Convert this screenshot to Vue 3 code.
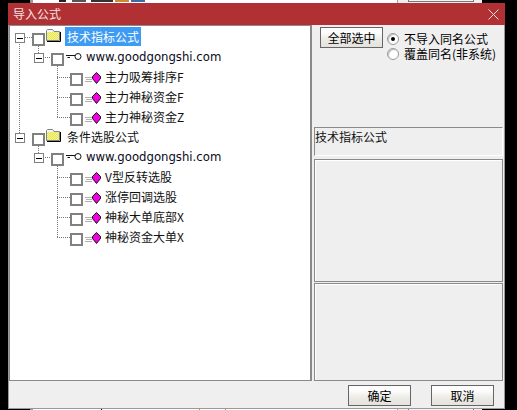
<script setup>
const rows = [
  { level: 0, type: 'folder', label: '技术指标公式', selected: true },
  { level: 1, type: 'key', label: 'www.goodgongshi.com' },
  { level: 2, type: 'item', label: '主力吸筹排序F' },
  { level: 2, type: 'item', label: '主力神秘资金F' },
  { level: 2, type: 'item', label: '主力神秘资金Z' },
  { level: 0, type: 'folder', label: '条件选股公式' },
  { level: 1, type: 'key', label: 'www.goodgongshi.com' },
  { level: 2, type: 'item', label: 'V型反转选股' },
  { level: 2, type: 'item', label: '涨停回调选股' },
  { level: 2, type: 'item', label: '神秘大单底部X' },
  { level: 2, type: 'item', label: '神秘资金大单X' }
]
const dotted = [
  'M19.5 42V133', 'M25 37.5H32',
  'M38.5 46V53', 'M45 57.5H51',
  'M57.5 66V117.5', 'M57 77.5H70', 'M57 97.5H70', 'M57 117.5H70',
  'M38.5 146V153', 'M45 157.5H51',
  'M57.5 166V237.5', 'M57 177.5H70', 'M57 197.5H70', 'M57 217.5H70', 'M57 237.5H70'
]
</script>

<template>
  <div class="screen">
    <div class="strip strip-top">
      <div class="strip-white">
        <i class="tick t1"></i><i class="tick t2"></i><i class="tick t3"></i><i class="tick t4"></i><i class="tick t5"></i>
      </div>
      <div class="strip-grey"><div class="strip-box"></div></div>
    </div>

    <div class="dialog">
      <header class="titlebar">
        <span class="title">导入公式</span>
        <svg class="close" width="11" height="11" viewBox="0 0 11 11">
          <path d="M.5 .5L10.5 10.5M10.5 .5L.5 10.5" stroke="#f3dcdc" stroke-width="1" fill="none" />
        </svg>
      </header>

      <div class="body">
        <div class="main">
          <div class="tree">
            <svg class="lines" width="301" height="352" viewBox="10 26 301 352">
              <path v-for="d in dotted" :key="d" :d="d" stroke="#777" stroke-width="1" stroke-dasharray="1 1" fill="none" shape-rendering="crispEdges" />
            </svg>
            <div v-for="(row, i) in rows" :key="i" class="row" :class="'level' + row.level">
              <span v-if="row.level < 2" class="expander"><i></i></span>
              <span class="check"></span>

              <svg v-if="row.type === 'folder'" class="ic-folder" width="16" height="13" viewBox="0 0 16 13">
                <defs>
                  <pattern :id="'dither' + i" width="2" height="2" patternUnits="userSpaceOnUse">
                    <rect width="2" height="2" fill="#fbfb50" />
                    <rect width="1" height="1" fill="#dede9a" />
                    <rect x="1" y="1" width="1" height="1" fill="#dede9a" />
                  </pattern>
                </defs>
                <path d="M1.5 11.5V1.5L2.5 .5H7.5L9 2.5H14.5V11.5Z" fill="#f4f4f4" stroke="#808080" />
                <rect x="2" y="3" width="12" height="8" :fill="'url(#dither' + i + ')'" />
                <path d="M15.5 3V12.5H2" stroke="#000" fill="none" />
              </svg>

              <svg v-else-if="row.type === 'key'" class="ic-key" width="16" height="9" viewBox="0 0 16 9">
                <path d="M0 3.5H9M1.5 5.5H4" stroke="#111" fill="none" />
                <circle cx="12" cy="4.5" r="3" fill="#fff" stroke="#111" />
              </svg>

              <svg v-else class="ic-item" width="17" height="12" viewBox="0 0 17 12">
                <path d="M0 5.5H7M1 7.5H7M0 9.5H7" stroke="#b0b0b0" fill="none" shape-rendering="crispEdges" />
                <path d="M11.5 .5L15.5 4.5V6.5L11.5 11.5L7.5 6.5V4.5Z" fill="#f000e0" stroke="#111" />
              </svg>

              <span class="label" :class="{ selected: row.selected, url: row.type === 'key' }">{{ row.label }}</span>
            </div>
          </div>

          <aside class="side">
            <div class="controls">
              <button class="btn btn-all">全部选中</button>
              <div class="radios">
                <label class="radio"><span class="dot on"></span>不导入同名公式</label>
                <label class="radio"><span class="dot"></span>覆盖同名(非系统)</label>
              </div>
            </div>
            <div class="info">技术指标公式</div>
            <div class="panel panel-a"></div>
            <div class="panel panel-b"></div>
          </aside>
        </div>

        <footer class="footer">
          <button class="btn btn-foot">确定</button>
          <button class="btn btn-foot">取消</button>
        </footer>
      </div>
    </div>

    <div class="strip strip-bottom">
      <div class="strip-white">
        <i class="tick b1"></i><i class="tick b2"></i><i class="tick b3"></i>
      </div>
      <div class="strip-grey"><div class="strip-box"></div></div>
    </div>
  </div>
</template>

<style>
html, body { margin: 0; background: #000; }
</style>

<style scoped>
.screen {
  width: 517px;
  height: 410px;
  background: #000;
  overflow: hidden;
  font-family: "Noto Sans CJK SC", "Liberation Sans", sans-serif;
  font-size: 12px;
  color: #000;
  display: flex;
  flex-direction: column;
}

/* background window peeking above and below the dialog */
.strip { display: flex; padding-left: 30px; flex: none; }
.strip-top { height: 3px; }
.strip-bottom { height: 1px; }
.strip-white {
  width: 364px;
  background: #fff;
  border-left: 3px solid #9a9a9a;
  display: flex;
  align-items: flex-start;
}
.strip-grey {
  width: 85px;
  background: #efefef;
  border-left: 1px solid #a0a0a0;
  box-sizing: border-box;
  padding-left: 10px;
}
.strip-box {
  width: 66px;
  height: 2px;
  box-sizing: border-box;
  border: 1px solid #777;
  border-top: 0;
  background: #f4f4f4;
}
.tick { display: block; height: 2px; background: #222; flex: none; }
.t1 { width: 7px; margin-left: 26px; }
.t2 { width: 14px; margin-left: 6px; background: #555; }
.t3 { width: 22px; margin-left: 5px; background: #333; }
.t4 { width: 14px; margin-left: 2px; background: #c98a3a; }
.t5 { width: 14px; margin-left: 2px; background: #3a6ea5; }
.b1, .b2, .b3 { width: 1px; height: 1px; }
.b1 { margin-left: 68px; background: #000; }
.b2 { margin-left: 97px; background: #c98a3a; }
.b3 { margin-left: 25px; background: #c98a3a; }

/* dialog */
.dialog {
  width: 497px;
  height: 406px;
  margin-left: 8px;
  flex: none;
  display: flex;
  flex-direction: column;
}
.titlebar {
  height: 22px;
  flex: none;
  background: #b03034;
  display: flex;
  align-items: center;
  justify-content: space-between;
  padding: 0 6px 0 5px;
  color: #f2e4e4;
}
.title { font-size: 12px; line-height: 22px; }
.body {
  flex: 1;
  min-height: 0;
  background: #efefef;
  border: 1px solid #9a9a9a;
  border-top: 0;
  display: flex;
  flex-direction: column;
}
.main { height: 356px; display: flex; flex: none; }

/* tree */
.tree {
  position: relative;
  width: 303px;
  height: 356px;
  box-sizing: border-box;
  background: #fff;
  border: 1px solid #8a8a8a;
  border-right-width: 2px;
  padding-top: 1px;
  flex: none;
  overflow: hidden;
}
.lines { position: absolute; left: 0; top: 0; }
.row {
  position: relative;
  height: 20px;
  display: flex;
  align-items: flex-start;
}
.level0 { padding-left: 5px; }
.level1 { padding-left: 24px; }
.level2 { padding-left: 60px; }
.expander {
  width: 10px;
  height: 10px;
  box-sizing: border-box;
  border: 1px solid #808080;
  background: #fff;
  margin: 6px 7px 0 0;
  display: flex;
  align-items: center;
  justify-content: center;
  flex: none;
}
.expander i { display: block; width: 6px; height: 1px; background: #000; }
.check {
  width: 13px;
  height: 13px;
  box-sizing: border-box;
  border: 2px solid #808080;
  background: #fff;
  margin-top: 6px;
  flex: none;
}
.ic-folder { margin: 2px 0 0 0; flex: none; }
.ic-key { margin: 5px 0 0 2px; flex: none; }
.ic-item { margin: 5px 0 0 2px; flex: none; }
.label {
  height: 19px;
  line-height: 19px;
  padding: 0 2px;
  white-space: nowrap;
  color: #111;
}
.level0 .label { margin-left: 4px; }
.level1 .label { margin-left: 2px; }
.level2 .label { margin-left: 1px; padding-left: 2px; }
.label.selected { background: #3d9bf3; color: #fff; }
.label.url {
  font-family: "DejaVu Sans", sans-serif;
  font-size: 11.7px;
  line-height: 21px;
  color: #0a0a20;
}

/* right side */
.side {
  flex: 1;
  min-width: 0;
  padding-left: 2px;
  display: flex;
  flex-direction: column;
}
.controls {
  height: 102px;
  flex: none;
  display: flex;
  align-items: flex-start;
  padding: 2px 0 0 6px;
  box-sizing: border-box;
}
.btn {
  font: inherit;
  color: #000;
  padding: 0;
  border: 1px solid #666;
  border-radius: 0;
  background: linear-gradient(#fdfdfd 0, #fdfdfd 25%, #ecebe6 60%, #e4e2dc 100%);
  line-height: 18px;
  box-sizing: border-box;
  flex: none;
}
.btn-all { width: 63px; height: 21px; margin-right: 4px; }
.radios { display: flex; flex-direction: column; padding-top: 4px; }
.radio { display: flex; align-items: center; height: 15px; line-height: 15px; white-space: nowrap; }
.dot {
  width: 12px;
  height: 12px;
  box-sizing: border-box;
  border-radius: 50%;
  border: 1px solid #9a9a9a;
  background: #fff;
  box-shadow: inset 1px 1px 1px #bbb;
  margin-right: 5px;
  display: flex;
  align-items: center;
  justify-content: center;
  flex: none;
}
.dot.on::after {
  content: "";
  width: 4px;
  height: 4px;
  border-radius: 50%;
  background: #000;
}
.info {
  width: 189px;
  height: 29px;
  box-sizing: border-box;
  border: 1px solid #fff;
  border-top-color: #8a8a8a;
  border-left-color: #8a8a8a;
  line-height: 17px;
  color: #111;
  margin-bottom: 3px;
  flex: none;
}
.panel {
  width: 189px;
  box-sizing: border-box;
  border: 1px solid #8a8a8a;
  box-shadow: inset 1px 1px 0 #fff;
  flex: none;
}
.panel-a { height: 123px; margin-bottom: 1px; }
.panel-b { height: 98px; }

.footer {
  flex: 1;
  display: flex;
  align-items: flex-start;
  padding: 4px 0 0 339px;
  gap: 20px;
}
.btn-foot { width: 63px; height: 21px; }
</style>
